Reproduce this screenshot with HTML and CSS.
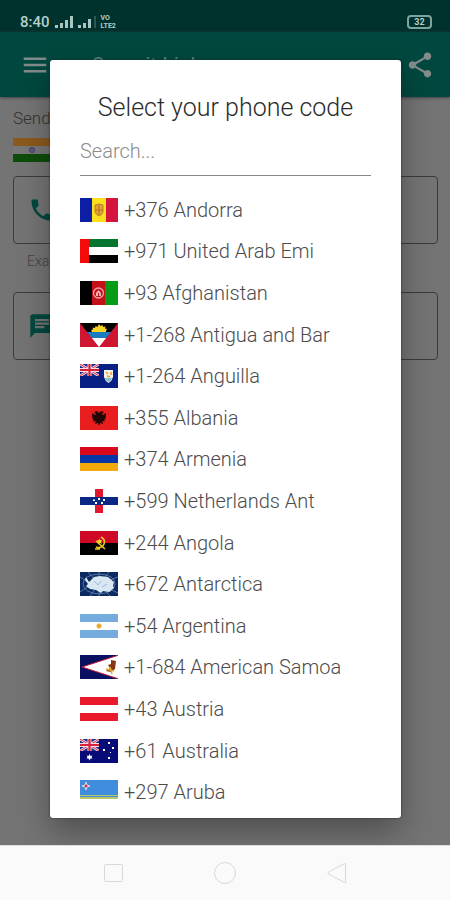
FILE: index.html
```
<!DOCTYPE html>
<html lang="en">
<head>
<meta charset="utf-8">
<meta name="viewport" content="width=device-width, initial-scale=1">
<title>Select your phone code</title>
<link rel="stylesheet" href="styles.css">
</head>
<body>
<svg class="defs" aria-hidden="true">
  <defs>
    <symbol id="jack" viewBox="0 0 19 12">
      <path fill="#1c2a80" d="M0 0h19v12H0z"/>
      <path stroke="#f3dfe6" stroke-width="2.6" d="M0 0l19 12M19 0L0 12"/>
      <path stroke="#d8304c" stroke-width="1" d="M0 0l19 12M19 0L0 12"/>
      <path stroke="#f3dfe6" stroke-width="4" d="M9.500 0v12M0 6h19"/>
      <path stroke="#d8203c" stroke-width="2.200" d="M9.500 0v12M0 6h19"/>
    </symbol>
  </defs>
</svg>
<div class="screen">
  <div class="status">
    <span class="clock">8:40</span>
    <svg class="signal" viewBox="0 0 42 14" aria-hidden="true">
      <path fill="#a9c6c1" d="M0 10h3v3H0zM5 8h3v5H5zM10 5h3v8h-3zM15 1h3v12h-3zM23 10h3v3h-3zM28 8h3v5h-3zM33 4h3v9h-3z"/>
      <path fill="#2b5851" d="M39 1h2v12h-2z"/>
    </svg>
    <span class="volte"><span>VO</span><span>LTE2</span></span>
    <span class="battery">32</span>
  </div>
  <header class="toolbar">
    <button class="icon-button" aria-label="Menu">
      <svg viewBox="0 0 24 24"><path d="M3 18h18v-2H3v2zm0-5h18v-2H3v2zm0-7v2h18V6H3z"/></svg>
    </button>
    <span class="app-title">Open it Link</span>
    <button class="icon-button" aria-label="Share">
      <svg viewBox="0 0 24 24"><path d="M18 16.080c-.76 0-1.440.3-1.960.77L8.910 12.700c.05-.23.09-.46.09-.7s-.04-.47-.09-.7l7.050-4.110c.54.5 1.250.81 2.040.81 1.660 0 3-1.340 3-3s-1.340-3-3-3-3 1.340-3 3c0 .24.04.47.09.7L8.040 9.810C7.500 9.310 6.790 9 6 9c-1.660 0-3 1.340-3 3s1.340 3 3 3c.79 0 1.500-.31 2.040-.81l7.120 4.160c-.05.21-.08.43-.08.65 0 1.610 1.310 2.920 2.920 2.920s2.920-1.310 2.920-2.920-1.310-2.920-2.920-2.920z"/></svg>
    </button>
  </header>
  <main class="form">
    <p class="intro">Send</p>
    <svg class="country" viewBox="0 0 38 24" aria-label="India"><path fill="#8b5a1d" d="M0 0h38v8H0z"/><path fill="#777" d="M0 8h38v8H0z"/><path fill="#0d4d0c" d="M0 16h38v8H0z"/><circle cx="19" cy="12" r="2.500" fill="#5c5c80" stroke="#3e3e6c"/></svg>
    <div class="field"><svg viewBox="0 0 24 24"><path d="M6.620 10.790c1.440 2.830 3.760 5.140 6.590 6.590l2.200-2.200c.27-.27.67-.36 1.020-.24 1.120.37 2.330.57 3.570.57.55 0 1 .45 1 1V20c0 .55-.45 1-1 1-9.390 0-17-7.610-17-17 0-.55.45-1 1-1h3.500c.55 0 1 .45 1 1 0 1.250.2 2.450.57 3.570.11.35.03.74-.25 1.020l-2.200 2.200z"/></svg></div>
    <p class="hint">Exa</p>
    <div class="field"><svg viewBox="0 0 24 24"><path d="M20 2H4c-1.100 0-2 .9-2 2v18l4-4h14c1.100 0 2-.9 2-2V4c0-1.100-.9-2-2-2zM6 9h12v2H6V9zm8 5H6v-2h8v2zm4-6H6V6h12v2z"/></svg></div>
  </main>
  <nav class="navbar">
    <button aria-label="Recent apps"><svg viewBox="0 0 24 24"><rect x="3.500" y="3.500" width="18" height="17" rx="1"/></svg></button>
    <button aria-label="Home"><svg viewBox="0 0 24 24"><circle cx="12" cy="12" r="10.500"/></svg></button>
    <button aria-label="Back"><svg viewBox="0 0 24 24"><path d="M20.500 3v18q0 1-1 .5L3.500 13q-1-1 0-2l16-8.500q1-.5 1 .5z"/></svg></button>
  </nav>
  <div class="overlay">
    <section class="dialog" role="dialog" aria-labelledby="dialog-title">
      <h1 id="dialog-title">Select your phone code</h1>
      <input class="search" type="text" placeholder="Search..." aria-label="Search">
      <div class="viewport">
        <ul class="codes">
          <li><button><svg viewBox="0 0 38 24"><path fill="#0b1ea5" d="M0 0h12v24H0z"/><path fill="#fbe01c" d="M12 0h14v24H12z"/><path fill="#d5133f" d="M26 0h12v24H26z"/><path d="M15 7q4-2 8 0v7q-1 3-4 4-3-1-4-4z" fill="#e3a62d" stroke="#b9822e"/><path d="M19 7v10M15 12h8" stroke="#bd6c30"/></svg>+376 Andorra</button></li>
          <li><button><svg viewBox="0 0 38 24"><path fill="#fff" d="M0 0h38v24H0z"/><path fill="#05742e" d="M9 0h29v8H9z"/><path fill="#000" d="M9 16h29v8H9z"/><path fill="#f50a0a" d="M0 0h9v24H0z"/></svg>+971 United Arab Emi</button></li>
          <li><button><svg viewBox="0 0 38 24"><path fill="#000" d="M0 0h12v24H0z"/><path fill="#c3101b" d="M12 0h13v24H12z"/><path fill="#059b17" d="M25 0h13v24H25z"/><circle cx="18.500" cy="12" r="5" fill="none" stroke="#f0a5a5" stroke-width="1.300"/><path d="M16 15v-3l2.500-3 2.500 3v3z" fill="#efb0b0"/><path d="M18.500 15v-3" stroke="#c3101b"/></svg>+93 Afghanistan</button></li>
          <li><button><svg viewBox="0 0 38 24"><path fill="#000" d="M0 0h38v24H0z"/><path fill="#f8d326" d="M12 9l-1-2 2-.5-.5-2 2.500.5.500-2 2 1L19 1l1.500 2 2-1 .5 2 2.500-.5-.5 2 2 .5-1 2v1z"/><path fill="#197cc2" d="M4 9h30v6H4z"/><path fill="#fff" d="M4 15h30v9H4z"/><path fill="#ce1532" d="M0 0l19 24L38 0v24H0z"/></svg>+1-268 Antigua and Bar</button></li>
          <li><button><svg viewBox="0 0 38 24"><path fill="#082083" d="M0 0h38v24H0z"/><use href="#jack" width="19" height="12"/><path fill="#f5f2e8" d="M24 6h9v7q-1 4-4.500 6Q25 17 24 13z"/><path fill="#83bfd2" d="M25 14h7q-1 3-3.500 4Q26 17 25 14z"/><path d="M26 8l2 2m3-2v3m-4 1l3 1" stroke="#eaa03a" stroke-width="1.500"/></svg>+1-264 Anguilla</button></li>
          <li><button><svg viewBox="0 0 38 24"><path fill="#e91f1f" d="M0 0h38v24H0z"/><path fill="#240607" d="M19 7l-2-2-3 1 2 2-1 1-3-2v4l1 1-1 1 2 1-1 2 3-1-1 3 3-1 1 3 1-3 3 1-1-3 3 1-1-2 2-1-1-1 1-1V7l-3 2-1-1 2-2-3-1z"/></svg>+355 Albania</button></li>
          <li><button><svg viewBox="0 0 38 24"><path fill="#d9091b" d="M0 0h38v8H0z"/><path fill="#0936a7" d="M0 8h38v8H0z"/><path fill="#f3a90a" d="M0 16h38v8H0z"/></svg>+374 Armenia</button></li>
          <li><button><svg viewBox="0 0 38 24"><path fill="#fff" d="M0 0h38v24H0z"/><path fill="#df1832" d="M15 0h8v24h-8z"/><path fill="#092885" d="M0 8h38v8H0z"/><path fill="#fff" d="M13 10l1 1 1-1v2h-2zM18 9h2v2h-2zM23 10h2v2h-2zM15 13h2v2h-2zM21 13h2v2h-2z"/></svg>+599 Netherlands Ant</button></li>
          <li><button><svg viewBox="0 0 38 24"><path fill="#ce0926" d="M0 0h38v12H0z"/><path fill="#000" d="M0 12h38v12H0z"/><path fill="none" stroke="#edca20" stroke-width="1.600" d="M21 6q5 3 3 7-2 5-8 3M16 10l9 8M15 18h5"/><path fill="#f5d827" d="M19 7l1 2 2 0-1 2 1 2-2-1-2 1v-2l-1-2h2z"/></svg>+244 Angola</button></li>
          <li><button><svg viewBox="0 0 38 24"><path fill="#0c2a62" d="M0 0h38v24H0z"/><path fill="none" stroke="#6787b1" stroke-width=".8" d="M0 5l12 7L0 20M8 0l11 12L10 24M19 0v24M29 0L19 12l11 12M38 5l-19 7 19 9M3 12q0-9 16-10 16 1 16 10-1 9-16 10Q4 21 3 12z"/><path fill="#d8e7f2" d="M6 5l3 5 5-5 6-1 8 1 6 5-1 4 1 2-5 4-6-1-2 2-5-3-6-1-4-3 2-2-3-4z"/><path stroke="#9db9d2" fill="none" d="M14 9l4 4 3-4m1 6l5-3"/></svg>+672 Antarctica</button></li>
          <li><button><svg viewBox="0 0 38 24"><path fill="#76acdd" d="M0 0h38v24H0z"/><path fill="#fff" d="M0 8h38v8H0z"/><circle cx="19" cy="12" r="2.200" fill="#eaa31d" stroke="#eaba5a"/></svg>+54 Argentina</button></li>
          <li><button><svg viewBox="0 0 38 24"><path fill="#08105f" d="M0 0h38v24H0z"/><path fill="#fff" stroke="#c01b3d" d="M39 0L2 12l37 12z"/><path fill="#873716" d="M31 5l5 1-1 8-4 3-5-1 4-3-2-3 3-1z"/><path stroke="#e2ac32" stroke-width="1.500" d="M26 14l8 2m-4-4l2 7"/></svg>+1-684 American Samoa</button></li>
          <li><button><svg viewBox="0 0 38 24"><path fill="#eb192c" d="M0 0h38v24H0z"/><path fill="#fff" d="M0 8h38v8H0z"/></svg>+43 Austria</button></li>
          <li><button><svg viewBox="0 0 38 24"><path fill="#070b78" d="M0 0h38v24H0z"/><use href="#jack" width="19" height="12"/><path fill="#fff" d="M9.500 15l1 2 2-.5-1 1.500 1 1.500-2 0-1 2-1-2h-2l1-1.500-1-1.500 2 .5zM28 3h2v2h-2zM23 10h2v2h-2zM32 8h2v2h-2zM30 13h1v1h-1zM28 18h2v2h-2z"/></svg>+61 Australia</button></li>
          <li><button><svg viewBox="0 0 38 24"><path fill="#3f8ddc" d="M0 0h38v19H0z"/><path fill="#b9c96a" d="M0 15h38v1H0zM0 17h38v2H0z"/><path fill="#d72f4f" stroke="#fff" stroke-width=".7" d="M6 2l1 3 3 1-3 1-1 3-1-3-3-1 3-1z"/></svg>+297 Aruba</button></li>
        </ul>
      </div>
    </section>
  </div>
</div>
</body>
</html>
```
FILE: styles.css
```
* { box-sizing: border-box; }
body { margin: 0; font-family: Roboto, "Noto Sans", sans-serif; font-weight: 300; }
button { border: 0; padding: 0; background: none; font: inherit; color: inherit; }
h1, p, ul { margin: 0; padding: 0; }
svg { display: block; flex: none; }
.defs { position: absolute; width: 0; height: 0; }

.screen { position: relative; display: flex; flex-direction: column; min-height: 100vh; background: #747474; }
.status { display: flex; align-items: center; height: 32px; padding: 11px 18px 0 20px; background: #00322d; color: #b3ceca; }
.clock { font-size: 15px; line-height: 20px; font-weight: 500; }
.signal { width: 42px; height: 14px; margin-left: 5px; }
.volte { display: flex; flex-direction: column; margin-left: 4px; font-size: 7px; line-height: 8px; font-weight: 700; }
.battery { margin-left: auto; width: 25px; border: 2px solid #7da59f; border-radius: 4px; font-size: 9px; line-height: 10px; font-weight: 700; text-align: center; }

.toolbar { display: flex; align-items: center; height: 65px; padding: 0 15px 0 20px; background: #00483f; color: #5d807b; box-shadow: 0 1px 3px #444; }
.icon-button svg { width: 30px; height: 30px; fill: #848c8b; }
.app-title { flex: 1; padding-left: 41px; font-size: 21px; font-weight: 400; }

.form { flex: 1; padding: 9px 12px 0 13px; color: #333; }
.intro { font-size: 17px; line-height: 24px; }
.country { width: 38px; height: 24px; margin: 8px 0 14px; }
.field { display: flex; align-items: center; height: 68px; padding-left: 14px; border: 1px solid #3b3b3b; border-radius: 4px; }
.field svg { width: 28px; height: 28px; fill: #00483f; }
.hint { padding: 5px 14px 19px; font-size: 14px; line-height: 24px; color: #444; }

.navbar { display: flex; align-items: center; justify-content: center; gap: 88px; height: 55px; background: #fafafa; border-top: 1px solid #ddd; }
.navbar svg { width: 24px; height: 24px; fill: none; stroke: #d9d9d9; stroke-width: 1; }

.overlay { position: absolute; inset: 0; display: flex; padding: 60px 49px 82px 50px; clip-path: inset(0 0 55px 0); }
.dialog { flex: 1; display: flex; flex-direction: column; padding: 32px 30px 5px; border-radius: 3px; background: #fff; box-shadow: 0 0 2px #222, 0 14px 32px rgba(0, 0, 0, .32); }
.dialog h1 { font-size: 25px; line-height: 32px; font-weight: 300; text-align: center; color: #2b2b2b; }
.search { width: 100%; height: 52px; padding: 2px 0 0; border: 0; border-bottom: 1px solid #888; border-radius: 0; background: none; font: inherit; font-size: 20px; color: #555; }
.search::placeholder { color: #8c8c8c; opacity: 1; }
.viewport { flex: 1; display: flex; margin-top: 13px; }
.codes { flex: 1; display: flex; flex-direction: column; list-style: none; }
.codes li { flex: 1; display: flex; }
.codes button { display: flex; align-items: center; gap: 6px; font-size: 20px; line-height: 24px; color: #4c4c4c; white-space: nowrap; }
.codes svg { width: 38px; height: 24px; }
```
